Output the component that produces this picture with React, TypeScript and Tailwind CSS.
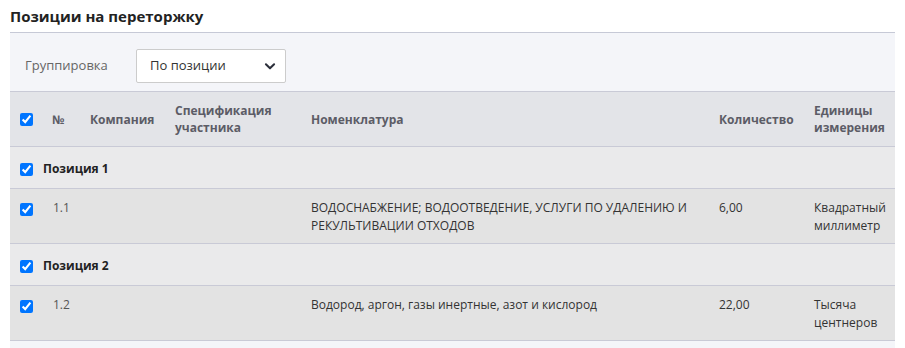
const rows = [
  {
    group: "Позиция 1",
    items: [
      {
        num: "1.1",
        name: "ВОДОСНАБЖЕНИЕ; ВОДООТВЕДЕНИЕ, УСЛУГИ ПО УДАЛЕНИЮ И РЕКУЛЬТИВАЦИИ ОТХОДОВ",
        qty: "6,00",
        unit: "Квадратный миллиметр",
      },
    ],
  },
  {
    group: "Позиция 2",
    items: [
      {
        num: "1.2",
        name: "Водород, аргон, газы инертные, азот и кислород",
        qty: "22,00",
        unit: "Тысяча центнеров",
      },
    ],
  },
];

function Check() {
  return <input type="checkbox" checked readOnly className="m-0 block h-[13px] w-[13px]" />;
}

export default function App() {
  return (
    <div className="min-h-[348px] bg-white px-[10px] font-['Open_Sans',sans-serif] text-[#333]">
      <h2 className="h-[33px] border-b border-[#c6c9d6] pt-[5px] text-[15px] font-bold leading-[22px] text-[#222]">
        Позиции на переторжку
      </h2>

      <section className="min-h-[315px] bg-[#f4f5f9]">
        <div className="flex items-center pt-[16px] pb-[8px]">
          <span className="w-[126px] pl-[15px] text-[13px] text-[#666]">Группировка</span>
          <div className="flex h-[34px] w-[150px] items-center justify-between rounded-[2px] border border-[#ccc] bg-white pl-[13px] pr-[8px] text-[13px] text-[#333]">
            <span>По позиции</span>
            <svg width="14" height="14" viewBox="0 0 24 24" fill="none" stroke="#2b2f3a" strokeWidth="3.5" strokeLinecap="round" strokeLinejoin="round">
              <path d="M5 9l7 7 7-7" />
            </svg>
          </div>
        </div>

        <table className="w-full table-fixed border-collapse text-left">
          <colgroup>
            <col className="w-[32px]" />
            <col className="w-[38px]" />
            <col className="w-[85px]" />
            <col className="w-[136px]" />
            <col />
            <col className="w-[95px]" />
            <col className="w-[91px]" />
          </colgroup>
          <thead>
            <tr className="h-[55px] border-y border-[#c9cad6] bg-[#e3e4e8] text-[12px] font-bold leading-[17px] text-[#5c5c66]">
              <th className="pl-[10px] align-middle">
                <Check />
              </th>
              <th className="pl-[10px]">№</th>
              <th className="pl-[10px]">Компания</th>
              <th className="pl-[10px]">
                Спецификация
                <br />
                участника
              </th>
              <th className="pl-[10px]">Номенклатура</th>
              <th className="pl-[10px]">Количество</th>
              <th className="pl-[10px]">
                Единицы
                <br />
                измерения
              </th>
            </tr>
          </thead>
          <tbody>
            {rows.map((r) => (
              <>
                <tr key={r.group} className="h-[42px] border-b border-[#c9cad6] bg-[#eaeaeb]">
                  <td colSpan={7} className="pl-[10px] pt-[3px]">
                    <div className="flex items-center gap-[10px] text-[12px] font-bold text-[#222]">
                      <Check />
                      <span>{r.group}</span>
                    </div>
                  </td>
                </tr>
                {r.items.map((it) => (
                  <tr key={it.num} className="h-[55px] border-b border-[#c9cad6] bg-[#e3e3e3] align-top text-[12px] leading-[18px]">
                    <td className="pl-[10px] pt-[14px]">
                      <Check />
                    </td>
                    <td className="pl-[11px] pt-[10px] text-[#555]">{it.num}</td>
                    <td className="pl-[10px] pt-[10px]"></td>
                    <td className="pl-[10px] pt-[10px]"></td>
                    <td className="pl-[10px] pr-[10px] pt-[10px]">{it.name}</td>
                    <td className="pl-[10px] pt-[10px]">{it.qty}</td>
                    <td className="pl-[10px] pt-[10px]">{it.unit}</td>
                  </tr>
                ))}
              </>
            ))}
          </tbody>
        </table>
      </section>
    </div>
  );
}
